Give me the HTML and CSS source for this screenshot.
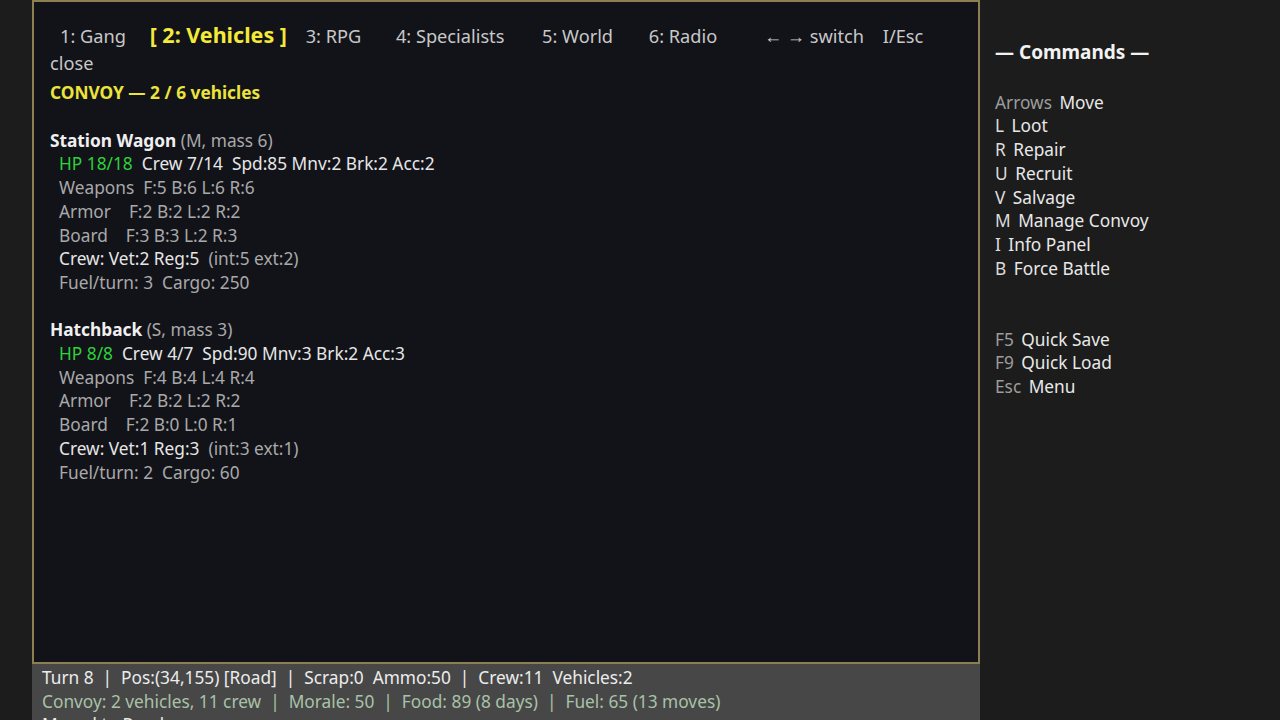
FILE: index.html
```html
<!DOCTYPE html>
<html lang="en">
  <head>
    <meta charset="UTF-8" />
    <meta name="viewport" content="width=device-width, initial-scale=1.0" />
    <title>Convoy - Vehicles</title>
    <link rel="stylesheet" href="styles.css">
  </head>
  <body>
    <div class="game">
      <div class="left">
        <div class="info-panel">
          <div class="tabs">
            <span class="tab first">1: Gang</span>
            <span class="tab active">[ 2: Vehicles ]</span>
            <span class="tab rpg">3: RPG</span>
            <span class="tab spec">4: Specialists</span>
            <span class="tab world">5: World</span>
            <span class="tab radio">6: Radio</span>
            <span class="tab hint">← → switch</span>
            <span class="tab">I/Esc close</span>
          </div>

          <div class="section-title">CONVOY — 2 / 6 vehicles</div>

          <div class="vehicle">
            <div class="veh-name">Station Wagon <span class="muted">(M, mass 6)</span></div>
            <div class="veh-line"><span class="hp">HP 18/18</span>&nbsp; Crew 7/14&nbsp; Spd:85 Mnv:2 Brk:2 Acc:2</div>
            <div class="veh-line muted">Weapons&nbsp; F:5 B:6 L:6 R:6</div>
            <div class="veh-line muted">Armor&nbsp;&nbsp;&nbsp; F:2 B:2 L:2 R:2</div>
            <div class="veh-line muted">Board&nbsp;&nbsp;&nbsp; F:3 B:3 L:2 R:3</div>
            <div class="veh-line">Crew: Vet:2 Reg:5&nbsp; <span class="muted">(int:5 ext:2)</span></div>
            <div class="veh-line muted">Fuel/turn: 3&nbsp; Cargo: 250</div>
          </div>

          <div class="vehicle">
            <div class="veh-name">Hatchback <span class="muted">(S, mass 3)</span></div>
            <div class="veh-line"><span class="hp">HP 8/8</span>&nbsp; Crew 4/7&nbsp; Spd:90 Mnv:3 Brk:2 Acc:3</div>
            <div class="veh-line muted">Weapons&nbsp; F:4 B:4 L:4 R:4</div>
            <div class="veh-line muted">Armor&nbsp;&nbsp;&nbsp; F:2 B:2 L:2 R:2</div>
            <div class="veh-line muted">Board&nbsp;&nbsp;&nbsp; F:2 B:0 L:0 R:1</div>
            <div class="veh-line">Crew: Vet:1 Reg:3&nbsp; <span class="muted">(int:3 ext:1)</span></div>
            <div class="veh-line muted">Fuel/turn: 2&nbsp; Cargo: 60</div>
          </div>
        </div>

        <div class="status-bar">
          <div class="status-main">Turn 8&nbsp; |&nbsp; Pos:(34,155) [Road]&nbsp; |&nbsp; Scrap:0&nbsp; Ammo:50&nbsp; |&nbsp; Crew:11&nbsp; Vehicles:2</div>
          <div class="status-sub">Convoy: 2 vehicles, 11 crew&nbsp; |&nbsp; Morale: 50&nbsp; |&nbsp; Food: 89 (8 days)&nbsp; |&nbsp; Fuel: 65 (13 moves)</div>
          <div class="status-main">Moved to Road</div>
        </div>
      </div>

      <div class="sidebar">
        <div class="cmd-title">— Commands —</div>
        <ul class="cmd-list">
          <li><span class="key dim">Arrows</span> Move</li>
          <li><span class="key">L</span> Loot</li>
          <li><span class="key">R</span> Repair</li>
          <li><span class="key">U</span> Recruit</li>
          <li><span class="key">V</span> Salvage</li>
          <li><span class="key">M</span> Manage Convoy</li>
          <li><span class="key">I</span> Info Panel</li>
          <li><span class="key">B</span> Force Battle</li>
        </ul>
        <ul class="cmd-list system">
          <li><span class="key dim">F5</span> Quick Save</li>
          <li><span class="key dim">F9</span> Quick Load</li>
          <li><span class="key dim">Esc</span> Menu</li>
        </ul>
      </div>
    </div>
  </body>
</html>
```

FILE: styles.css
```css
html,
body {
  margin: 0;
  height: 100%;
  overflow: hidden;
}
body {
  background-color: #1c1c1c;
  font-family: "Noto Sans", "Open Sans", sans-serif;
  font-size: 17.3px;
  line-height: 23.7px;
  color: #e6e6e6;
}
.game {
  display: flex;
  height: 720px;
}
.left {
  width: 948px;
  margin-left: 32px;
  display: flex;
  flex-direction: column;
}
.info-panel {
  height: 664px;
  box-sizing: border-box;
  background-color: #121319;
  border: 2px solid #8c8052;
  padding: 19px 14px 0 16px;
}

/* tab strip, wraps like the in-game label does */
.tabs {
  font-size: 18.2px;
  line-height: 27px;
  color: #c8c8c8;
}
.tab {
  margin-right: 29px;
}
.tab.first {
  margin-left: 10px;
  margin-right: 19px;
}
.tab.active {
  color: #f3ea3a;
  font-weight: bold;
  font-size: 21.5px;
  line-height: 27px;
  margin-right: 14px;
}
.tab.rpg {
  margin-right: 30px;
}
.tab.spec {
  margin-right: 33px;
}
.tab.world {
  margin-right: 31px;
}
.tab.radio {
  margin-right: 42px;
}
.tab.hint {
  margin-right: 14px;
}
.section-title {
  margin: 4px 0 24px;
  color: #ece43a;
  font-weight: bold;
}
.vehicle {
  margin-bottom: 23.7px;
}
.veh-name {
  font-weight: bold;
  color: #f0f0f0;
}
.veh-name .muted {
  font-weight: normal;
}
.veh-line {
  padding-left: 9px;
}
.muted {
  color: #a9a9a9;
}
.hp {
  color: #2ed13a;
}
.status-bar {
  flex: 1;
  background-color: #474747;
  padding: 2px 10px 0;
  overflow: hidden;
}
.status-main {
  color: #ececec;
}
.status-sub {
  color: #a9c2a8;
}
.sidebar {
  flex: 1;
  padding: 41px 0 0 15px;
}
.cmd-title {
  font-size: 19px;
  font-weight: bold;
  color: #f2f2f2;
  margin-bottom: 26px;
}
.cmd-list {
  list-style: none;
  margin: 0;
  padding: 0;
  color: #e8e8e8;
}
.cmd-list.system {
  margin-top: 47.4px;
}
.key {
  margin-right: 3px;
  color: #dcdcdc;
}
.key.dim {
  color: #9d9d9d;
}
```
